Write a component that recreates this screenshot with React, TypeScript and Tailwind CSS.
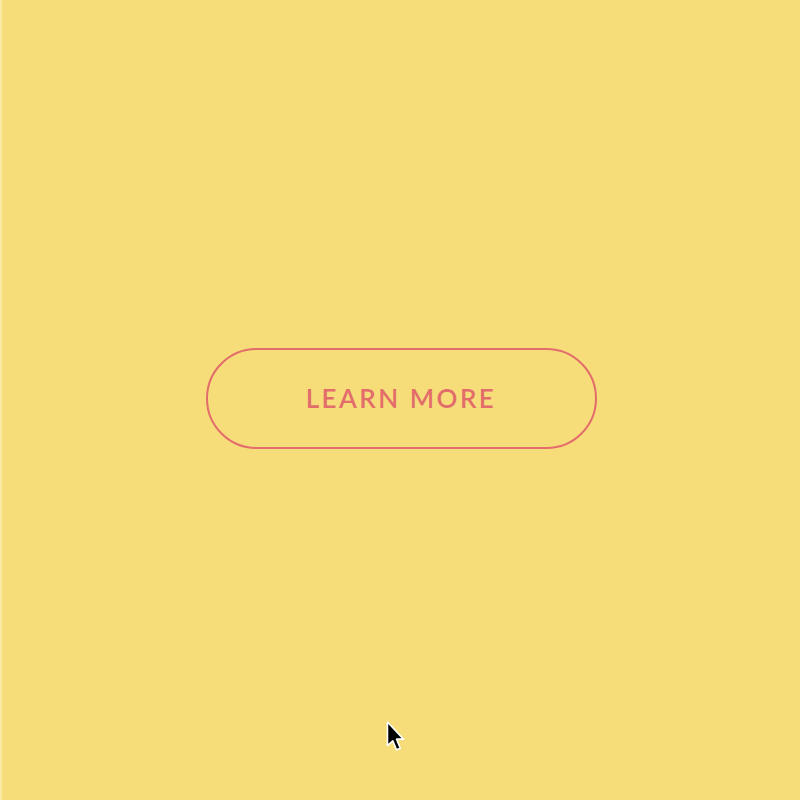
export default function App() {
  return (
    <div className="relative flex h-[800px] w-[800px] items-center justify-center border-l-2 border-l-[#fbe9a6] bg-[#f7dc7a]">
      <button
        type="button"
        className="mt-[-3px] flex h-[101px] w-[391px] items-center justify-center rounded-full border-2 border-[#e26d6b] text-[26px] font-semibold tracking-[0.095em] text-[#e26d6b]"
        style={{ fontFamily: 'Lato, "Open Sans", sans-serif' }}
      >
        LEARN MORE
      </button>

      {/* mouse cursor */}
      <svg
        className="absolute left-[382px] top-[721px]"
        width="24"
        height="32"
        viewBox="0 0 20 30"
      >
        <path
          d="M2 1 L2 23 L7 18.5 L10.5 27 L14 25.5 L10.5 17 L17 17 Z"
          fill="#000"
          stroke="#fff"
          strokeWidth="1.5"
          strokeLinejoin="round"
        />
      </svg>
    </div>
  )
}
